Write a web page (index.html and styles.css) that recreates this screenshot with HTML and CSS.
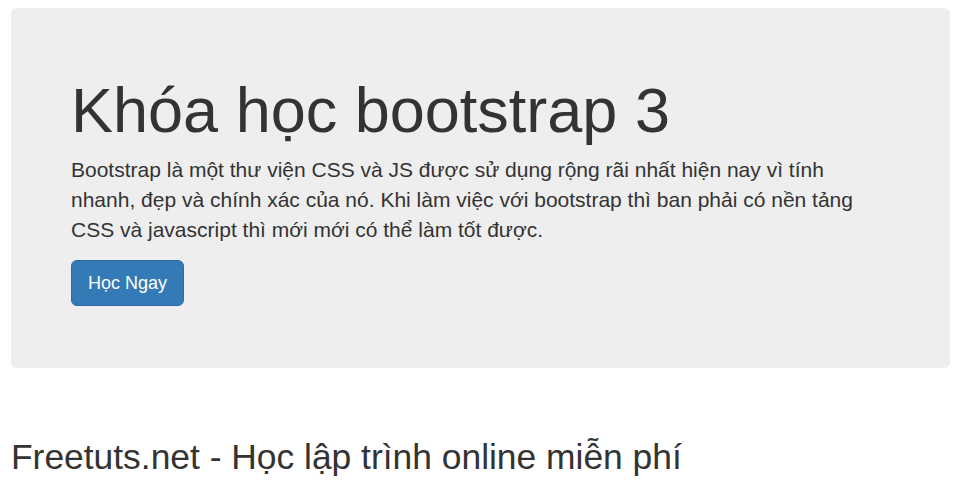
FILE: index.html
```html
<!DOCTYPE html>
<html lang="vi">
<head>
<meta charset="utf-8">
<link rel="stylesheet" href="styles.css">
</head>
<body>
<div class="page">
  <div class="jumbotron">
    <h1 class="jt-title">Khóa học bootstrap 3</h1>
    <p class="jt-text">Bootstrap là một thư viện CSS và JS được sử dụng rộng rãi nhất hiện nay vì tính nhanh, đẹp và chính xác của nó. Khi làm việc với bootstrap thì ban phải có nền tảng CSS và javascript thì mới mới có thể làm tốt được.</p>
    <p class="jt-action"><a class="btn" href="#">Học Ngay</a></p>
  </div>
  <h1 class="site-title">Freetuts.net - Học lập trình online miễn phí</h1>
</div>
</body>
</html>
```
FILE: styles.css
```css
* { box-sizing: border-box; }
html, body { margin: 0; padding: 0; background: #fff; }
body {
  font-family: "Liberation Sans", Arial, sans-serif;
  font-size: 14px;
  line-height: 1.42857143;
  color: #333;
}
.page {
  padding: 8px 12px 0 11px;
}
.jumbotron {
  background: #eee;
  border-radius: 6px;
  padding: 48px 60px;
  margin-bottom: 30px;
}
.jt-title {
  font-size: 63px;
  font-weight: 500;
  line-height: 1.1;
  margin: 20px 0 10px;
  color: inherit;
}
.jt-text {
  font-size: 21px;
  line-height: 30px;
  margin: 0 0 15px;
  max-width: 800px;
}
.jt-action {
  font-size: 21px;
  line-height: 30px;
  margin: 0 0 14px;
}
.btn {
  display: inline-block;
  padding: 10px 16px;
  font-size: 18px;
  line-height: 1.3333333;
  border-radius: 6px;
  color: #fff;
  background: #337ab7;
  border: 1px solid #2e6da4;
  text-decoration: none;
  vertical-align: middle;
}
.site-title {
  font-size: 35.4px;
  font-weight: 500;
  line-height: 1.1;
  margin: 70px 0 10px;
}
```
